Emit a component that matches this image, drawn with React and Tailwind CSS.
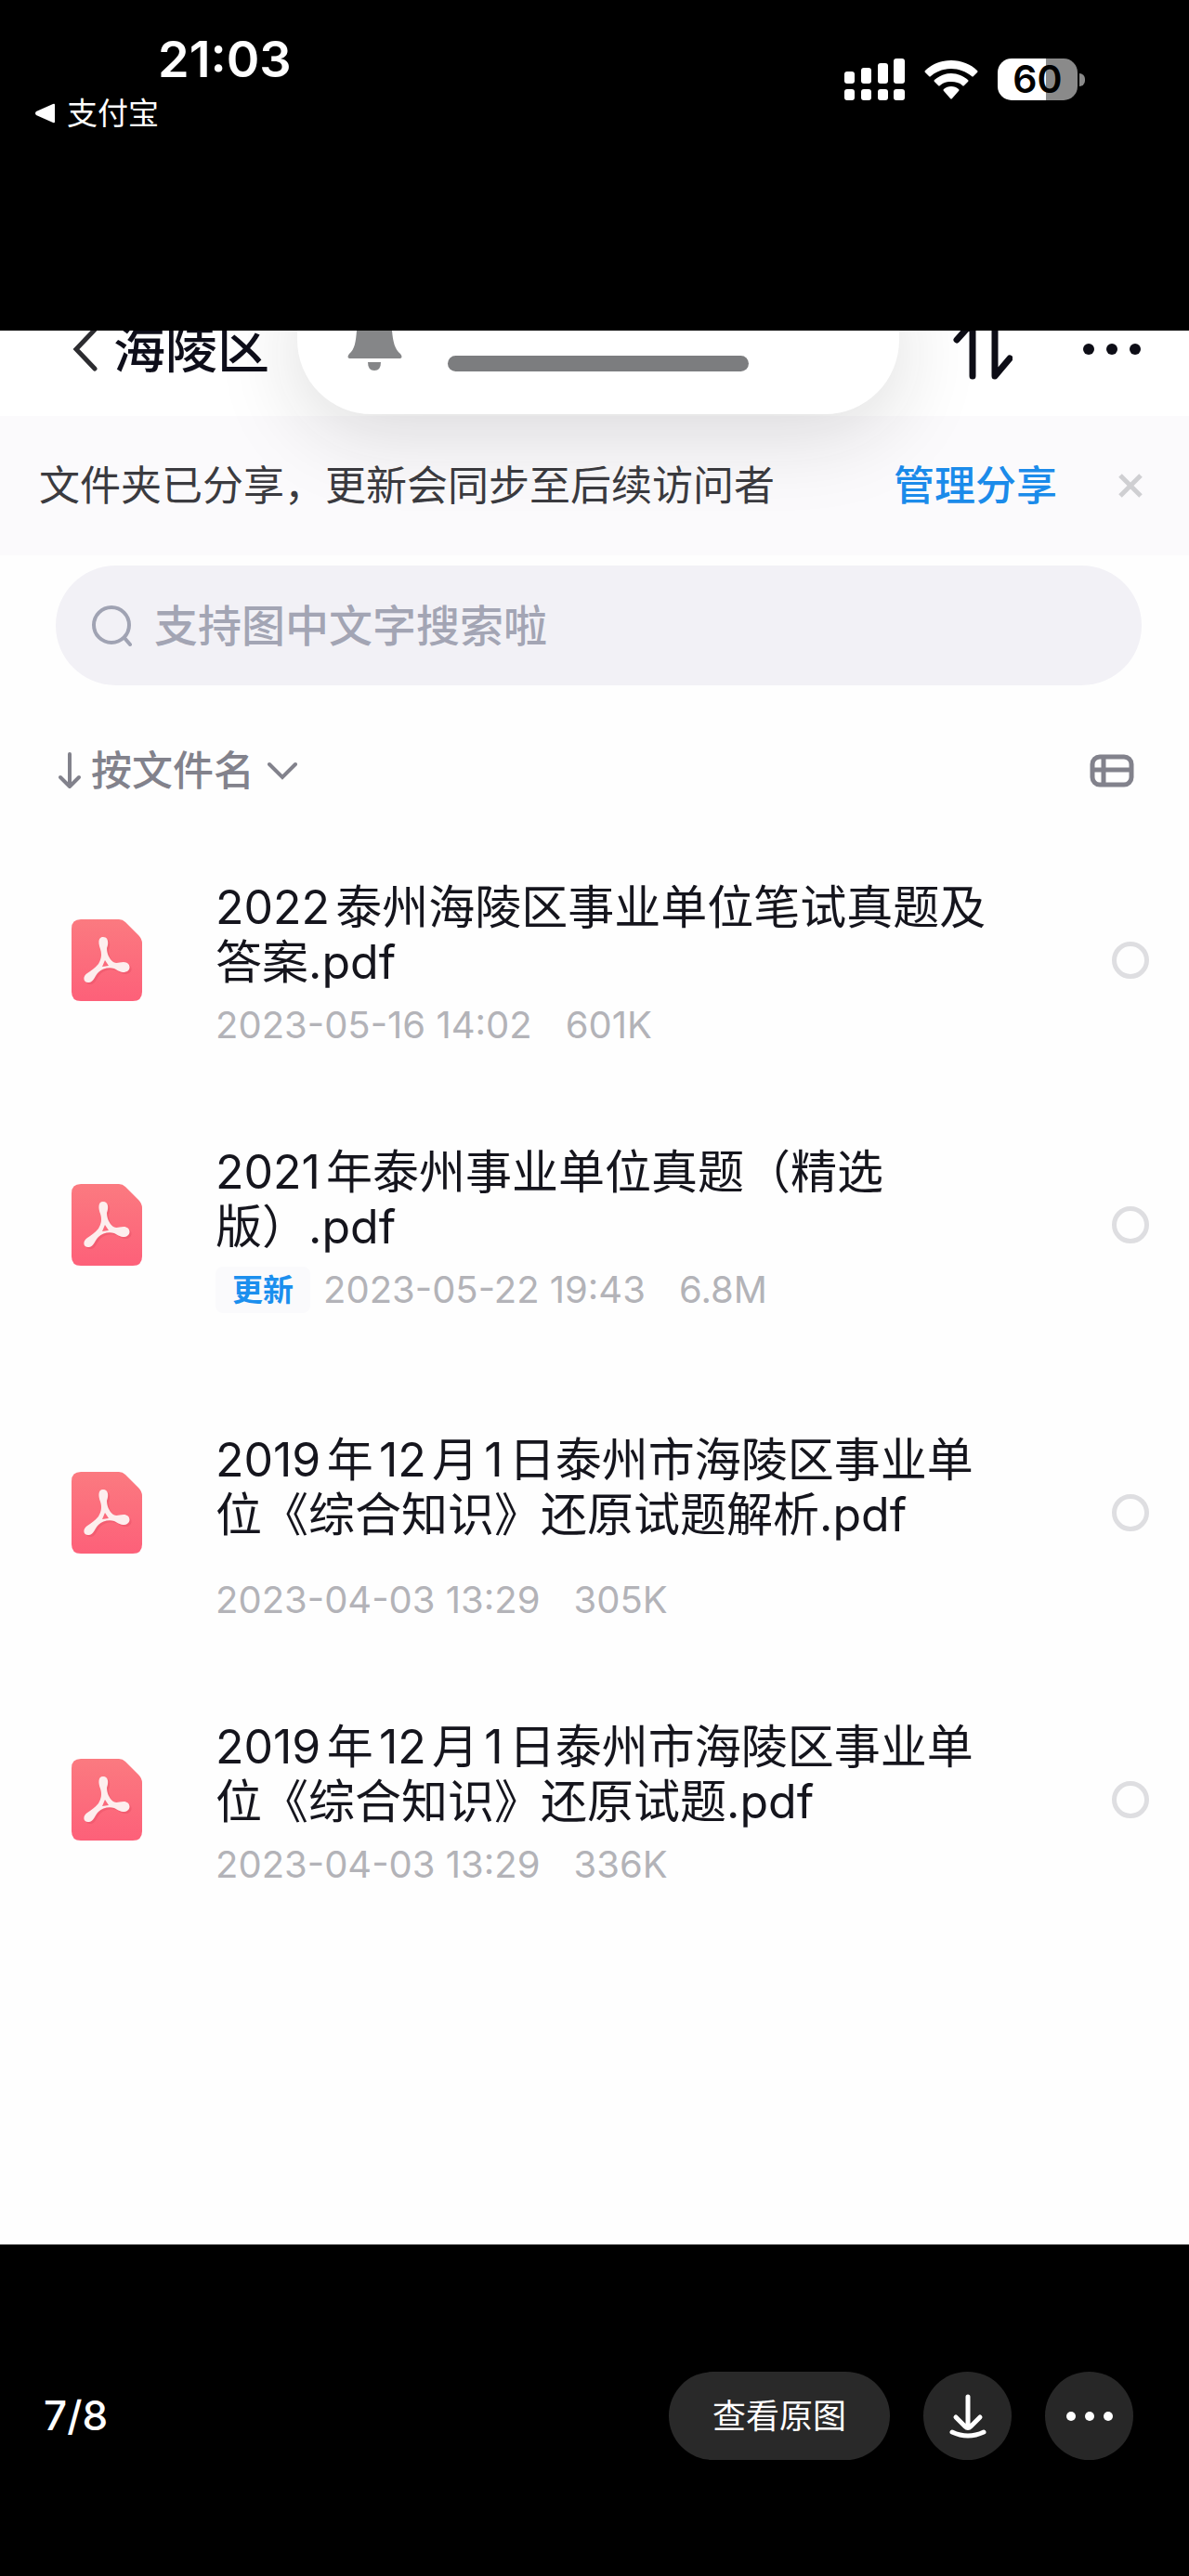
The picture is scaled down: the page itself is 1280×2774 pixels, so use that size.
import React from 'react';

const files = [
  {
    id: 'f1',
    lines: ['2022泰州海陵区事业单位笔试真题及', '答案.pdf'],
    date: '2023-05-16 14:02',
    size: '601K',
    rowClass: 'pb-[107px]',
    titleClass: 'mb-4',
  },
  {
    id: 'f2',
    lines: ['2021年泰州事业单位真题（精选', '版）.pdf'],
    date: '2023-05-22 19:43',
    size: '6.8M',
    updated: true,
    rowClass: 'pb-[132px]',
    titleClass: 'mb-4',
  },
  {
    id: 'f3',
    lines: ['2019年12月1日泰州市海陵区事业单', '位《综合知识》还原试题解析.pdf'],
    date: '2023-04-03 13:29',
    size: '305K',
    rowClass: 'pb-[107px]',
    titleClass: 'mb-10',
  },
  {
    id: 'f4',
    lines: ['2019年12月1日泰州市海陵区事业单', '位《综合知识》还原试题.pdf'],
    date: '2023-04-03 13:29',
    size: '336K',
    rowClass: 'pb-[107px]',
    titleClass: 'mb-4',
  },
];

const PdfIcon = () => (
  <svg viewBox="0 0 76 88" className="w-[76px] h-[88px]" aria-hidden="true">
    <defs>
      <linearGradient id="pdfFill" x1="0" y1="0" x2="0" y2="1">
        <stop offset="0" stopColor="#fb7a80" />
        <stop offset="1" stopColor="#fd6079" />
      </linearGradient>
    </defs>
    <path
      d="M10 0H51Q55 0 58 3L72 17Q76 21 76 26V78Q76 88 66 88H10Q0 88 0 78V10Q0 0 10 0Z"
      fill="url(#pdfFill)"
    />
    <g fill="#e0485f" opacity="0.35" transform="translate(2 2)">
      <path d="M34 19C28 19 29 27 31 32C33 38 32 43 29 48C25 53 21 55 17 58C11 62 13 69 19 68C24 67 25 61 29 57C33 53 40 51 46 53C50 55 52 57 57 57C65 56 64 46 56 46C51 46 49 48 45 46C40 42 38 36 38 31C40 26 40 19 34 19Z" />
    </g>
    <path
      d="M34 19C28 19 29 27 31 32C33 38 32 43 29 48C25 53 21 55 17 58C11 62 13 69 19 68C24 67 25 61 29 57C33 53 40 51 46 53C50 55 52 57 57 57C65 56 64 46 56 46C51 46 49 48 45 46C40 42 38 36 38 31C40 26 40 19 34 19Z"
      fill="#fdeeee"
    />
    <path d="M36 44L40 50L33 51Z" fill="#fb6b7c" />
  </svg>
);

const StatusIcons = () => (
  <div className="flex items-center">
    {/* Signal */}
    <svg viewBox="0 0 65 45" className="w-[65px] h-[45px]" fill="#fff" aria-hidden="true">
      <rect x="0" y="14" width="11" height="13" rx="3" />
      <rect x="18" y="10" width="11" height="17" rx="3" />
      <rect x="36" y="5" width="11" height="22" rx="3" />
      <rect x="53" y="0" width="12" height="27" rx="3" />
      <rect x="0" y="33" width="11" height="12" rx="3" />
      <rect x="18" y="33" width="11" height="12" rx="3" />
      <rect x="36" y="33" width="11" height="12" rx="3" />
      <rect x="53" y="33" width="12" height="12" rx="3" />
    </svg>

    {/* Wifi */}
    <svg viewBox="0 0 58 42" className="ml-[21px] w-[58px] h-[42px]" fill="#fff" aria-hidden="true">
      <path d="M29 0C40 0 50 4 57 11Q58 12 57 13L53 17Q52 18 51 17C45 12 37 9 29 9C21 9 13 12 7 17Q6 18 5 17L1 13Q0 12 1 11C8 4 18 0 29 0Z" />
      <path d="M29 14C36 14 42 17 47 21Q48 22 47 23L43 27Q42 28 41 27C38 24 34 23 29 23C24 23 20 24 17 27Q16 28 15 27L11 23Q10 22 11 21C16 17 22 14 29 14Z" />
      <path d="M29 28C32 28 35 29 37 31Q38 32 37 33L30 41Q29 42 28 41L21 33Q20 32 21 31C23 29 26 28 29 28Z" />
    </svg>

    {/* Battery */}
    <div className="ml-[21px] flex items-center gap-[2px]">
      <div className="w-[86px] h-[45px] rounded-[15px] flex items-center justify-center bg-[linear-gradient(to_right,#fff_60%,#8a8a8a_60%)] text-[41px] leading-[45px] font-semibold text-black">
        60
      </div>
      <div className="w-[6px] h-[14px] rounded-r-full bg-[#8a8a8a]" />
    </div>
  </div>
);

const FileRow = ({ file }) => (
  <li className={`flex items-start pl-[77px] pr-[43px] ${file.rowClass}`}>
    <div className="mt-[42px] shrink-0">
      <PdfIcon />
    </div>
    <div className="ml-[79px] flex-1">
      <label
        htmlFor={file.id}
        className={`block text-[50px] leading-[59px] whitespace-nowrap [text-autospace:normal] text-[#15151d] ${file.titleClass}`}
      >
        {file.lines[0]}
        <br />
        {file.lines[1]}
      </label>
      <div className="flex items-center h-11 text-[40px] leading-[44px] whitespace-nowrap text-[#b3b3b8]">
        {file.updated && (
          <span className="mr-[14px] w-[102px] h-[50px] rounded-lg flex items-center justify-center bg-[#fafafc] text-[33px] font-bold text-[#1b8fee]">
            更新
          </span>
        )}
        <span>{file.date}</span>
        <span className="ml-9">{file.size}</span>
      </div>
    </div>
    <input
      id={file.id}
      type="checkbox"
      className="mt-[66px] size-10 shrink-0 appearance-none rounded-full border-5 border-[#dedee1]"
    />
  </li>
);

const SharedFolder = () => (
  <main className="relative flex-1 overflow-hidden bg-[#fefefe]">
    {/* Title bar, partly scrolled out of view */}
    <header className="h-[92px] overflow-hidden bg-white">
      <div className="-mt-5 h-20 pl-[78px] pr-[50px] flex items-center">
        <button aria-label="返回">
          <svg viewBox="0 0 28 48" className="w-7 h-12" fill="none" stroke="#2c2c30" strokeWidth="5" strokeLinecap="round" aria-hidden="true">
            <path d="M24 3L4 24L24 45" />
          </svg>
        </button>
        <h1 className="ml-4 text-[56px] leading-[80px] font-medium text-[#0e0e1a]">海陵区</h1>
        <button aria-label="排序" className="ml-auto">
          <svg viewBox="0 0 64 68" className="w-16 h-[68px]" fill="none" stroke="#0d0d16" strokeWidth="7" strokeLinecap="round" strokeLinejoin="round" aria-hidden="true">
            <path d="M4 24L21 5V63" />
            <path d="M45 5V63L61 44" />
          </svg>
        </button>
        <button aria-label="更多" className="ml-[74px]">
          <svg viewBox="0 0 66 16" className="w-[66px] h-4" fill="#0d0d16" aria-hidden="true">
            <circle cx="8" cy="8" r="6" />
            <circle cx="33" cy="8" r="6" />
            <circle cx="58" cy="8" r="6" />
          </svg>
        </button>
      </div>
    </header>

    {/* Share notice */}
    <section className="h-[150px] pl-[42px] pr-[50px] flex items-center bg-[#fbfafc] text-[44px] leading-[60px]">
      <p className="text-[#3b3b40] whitespace-nowrap">文件夹已分享，更新会同步至后续访问者</p>
      <a href="#share" className="ml-auto font-medium text-[#1b8bea] whitespace-nowrap">管理分享</a>
      <button aria-label="关闭" className="ml-[66px]">
        <svg viewBox="0 0 26 26" className="w-[26px] h-[26px]" fill="none" stroke="#cfcfd2" strokeWidth="5" aria-hidden="true">
          <path d="M2 2L24 24M24 2L2 24" />
        </svg>
      </button>
    </section>

    {/* Silent mode toast hanging over the title bar */}
    <div className="absolute -top-20 left-1/4 w-[648px] h-[170px] pt-20 rounded-[80px] bg-white shadow-[0_20px_90px_rgba(24,26,30,0.15)]">
      <div className="flex items-start">
        <svg viewBox="0 0 60 44" className="ml-[54px] w-[60px] h-[44px]" fill="#858688" aria-hidden="true">
          <path d="M10 0H48C49 12 51 20 57 25Q60 29 57 30H2Q-1 29 2 25C8 20 9 12 10 0Z" />
          <path d="M22 34H36Q36 43 29 43Q22 43 22 34Z" />
        </svg>
        <div className="ml-12 mt-[27px] w-[324px] h-[17px] rounded-full bg-[#7c7d7f]" />
      </div>
    </div>

    {/* Search */}
    <div className="relative mt-[11px] ml-[60px] mr-[51px] h-[129px] pl-[38px] rounded-full flex items-center bg-[#f2f1f6]">
      <svg viewBox="0 0 44 44" className="w-11 h-11 shrink-0" fill="none" stroke="#a0a3b3" strokeWidth="4" strokeLinecap="round" aria-hidden="true">
        <circle cx="22" cy="21" r="19" />
        <path d="M36 35L42 42" />
      </svg>
      <input
        type="search"
        aria-label="搜索"
        placeholder="支持图中文字搜索啦"
        className="ml-6 mr-8 flex-1 bg-transparent text-[47px] leading-[64px] font-medium outline-none placeholder:text-[#a3a5b4]"
      />
    </div>

    {/* Sort row */}
    <div className="mt-[60px] pl-[62px] pr-[59px] h-16 flex items-center text-[#82828c]">
      <svg viewBox="0 0 26 40" className="w-[26px] h-10" fill="none" stroke="#82828c" strokeWidth="4" strokeLinecap="round" strokeLinejoin="round" aria-hidden="true">
        <path d="M13 2V37M3 27L13 37L23 27" />
      </svg>
      <select aria-label="排序方式" className="ml-[10px] w-[178px] h-16 appearance-none bg-transparent text-[44px] leading-[64px] font-medium">
        <option>按文件名</option>
      </select>
      <svg viewBox="0 0 32 20" className="ml-3 w-8 h-5" fill="none" stroke="#82828c" strokeWidth="4" strokeLinecap="round" aria-hidden="true">
        <path d="M2 3L16 17L30 3" />
      </svg>
      <button aria-label="切换视图" className="ml-auto">
        <svg viewBox="0 0 48 36" className="w-12 h-9" fill="none" stroke="#82828c" strokeWidth="5" aria-hidden="true">
          <rect x="3" y="3" width="42" height="30" rx="8" />
          <path d="M3 17H45M15 3V33" />
        </svg>
      </button>
    </div>

    {/* Files */}
    <ul className="mt-[86px]">
      {files.map((file) => (
        <FileRow key={file.id} file={file} />
      ))}
    </ul>
  </main>
);

const App = () => {
  return (
    <div className="min-h-screen flex flex-col bg-black text-white font-['Inter','Noto_Sans_CJK_SC',sans-serif]">
      {/* Status bar */}
      <div className="h-[356px] shrink-0 flex items-start justify-between pl-[38px] pr-[112px]">
        <div className="pt-8">
          <div className="ml-[132px] text-[54px] leading-[64px] font-semibold">21:03</div>
          <button className="mt-1 h-11 flex items-center gap-3 text-[33px] leading-[44px]">
            <svg viewBox="0 0 22 22" className="w-[22px] h-[22px]" fill="#fff" aria-hidden="true">
              <path d="M1 9L19 1Q21 0 21 2V20Q21 22 19 21L1 13Q-1 11 1 9Z" />
            </svg>
            支付宝
          </button>
        </div>
        <div className="pt-[63px]">
          <StatusIcons />
        </div>
      </div>

      <SharedFolder />

      {/* Viewer controls */}
      <footer className="h-[357px] shrink-0 flex items-start pt-[137px] pl-[47px] pr-[60px]">
        <span className="text-[44px] leading-[95px] font-medium">7/8</span>
        <div className="ml-auto flex gap-9">
          <button className="w-[238px] h-[95px] rounded-full bg-[#292929] text-[36px]">查看原图</button>
          <button aria-label="下载" className="size-[95px] rounded-full flex items-center justify-center bg-[#272727]">
            <svg viewBox="0 0 40 48" className="w-10 h-12" fill="none" stroke="#fff" strokeWidth="5" strokeLinecap="round" strokeLinejoin="round" aria-hidden="true">
              <path d="M20 3V35M7 25L17 35Q20 38 23 35L33 25" />
              <path d="M3 41Q20 49 37 41" />
            </svg>
          </button>
          <button aria-label="更多" className="size-[95px] rounded-full flex items-center justify-center bg-[#272727]">
            <svg viewBox="0 0 50 12" className="w-[50px] h-3" fill="#fff" aria-hidden="true">
              <circle cx="5" cy="6" r="5" />
              <circle cx="25" cy="6" r="5" />
              <circle cx="45" cy="6" r="5" />
            </svg>
          </button>
        </div>
      </footer>
    </div>
  );
};

export default App;
